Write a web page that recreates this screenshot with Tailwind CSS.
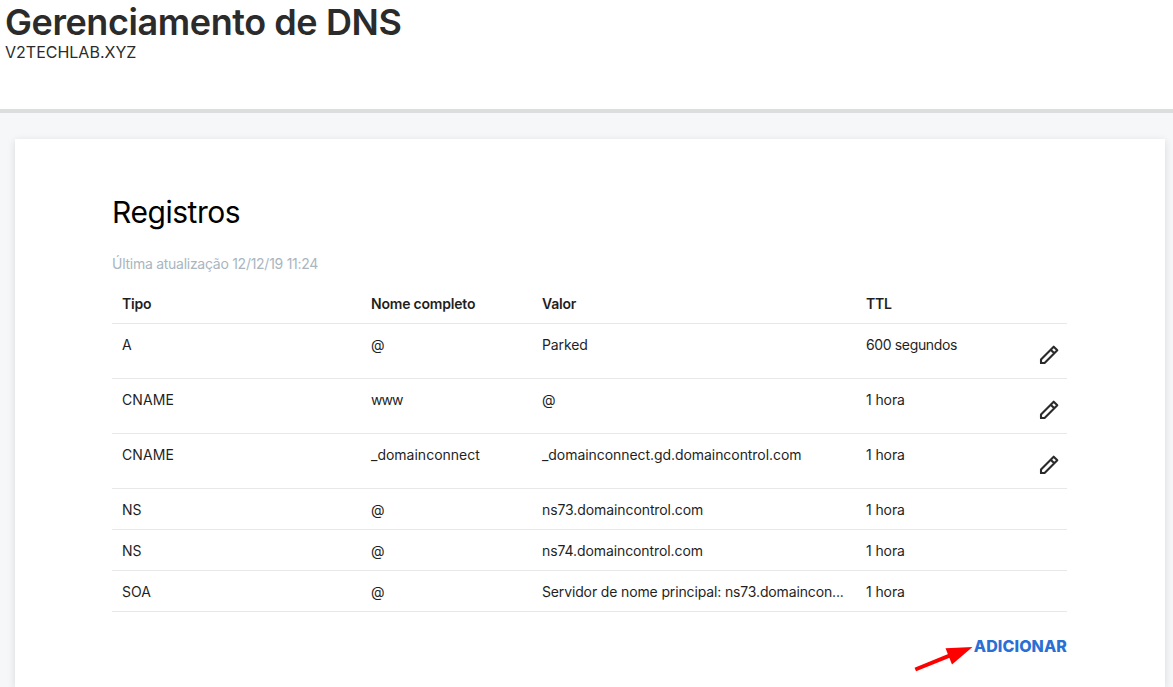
<!DOCTYPE html>
<html lang="pt-BR">
<head>
<meta charset="utf-8">
<title>Gerenciamento de DNS</title>
<script src="https://cdn.jsdelivr.net/npm/@tailwindcss/browser@4"></script>
</head>
<body class="h-[687px] overflow-hidden bg-[#f5f7f9] font-['Inter','Liberation_Sans',sans-serif] text-[#2b2b2b]">
<svg class="hidden"><symbol id="pencil" viewBox="0 0 20 20"><path d="M2 18v-3.600L14.700 1.700l3.600 3.600L5.600 18zM11.700 4.700l3.600 3.600" fill="none" stroke="#2b2b2b" stroke-width="2.100" stroke-linejoin="round"/><path d="M1 14.800V19h4.200z" fill="#2b2b2b"/></symbol></svg>
<div class="flex h-full flex-col">
  <header class="h-[113px] shrink-0 border-b-4 border-[#dcdddd] bg-white pl-[5px] pt-px">
    <h1 class="text-[36px] leading-[42px] font-semibold tracking-[-0.42px] whitespace-nowrap">Gerenciamento de DNS</h1>
    <p class="text-[16px] leading-[18px]">V2TECHLAB.XYZ</p>
  </header>
  <main class="mt-[26px] mr-2 ml-[15px] flex-1 bg-white pt-[53px] pr-[98px] pl-[97px] shadow-[0_2px_8px_rgba(0,0,0,0.12)]">
    <h2 class="text-[30px] leading-[40px] tracking-[-0.45px] text-black">Registros</h2>
    <p class="mt-[22px] text-[14px] leading-5 tracking-[-0.27px] text-[#a9b6c0]">Última atualização 12/12/19 11:24</p>
    <div class="mt-[10px] text-[14px] leading-5 whitespace-nowrap text-[#1f1f1f] *:grid *:h-[41px] *:grid-cols-[249px_171px_324px_1fr_28px] *:border-b *:border-[#e8e8e8] *:pt-[11px] *:pl-[10px]">
      <div class="h-10! pt-[10px]! font-semibold"><span class="tracking-[-0.2px]">Tipo</span><span class="tracking-[-0.2px]">Nome completo</span><span class="tracking-[-0.2px]">Valor</span><span class="tracking-[-0.2px]">TTL</span></div>
      <div class="h-[55px]!"><span>A</span><span>@</span><span class="tracking-[-0.1px]">Parked</span><span class="tracking-[-0.36px]">600 segundos</span><svg class="mt-[10px] size-5"><use href="#pencil"/></svg></div>
      <div class="h-[55px]!"><span class="tracking-[0.1px]">CNAME</span><span class="tracking-[-0.9px]">www</span><span>@</span><span class="tracking-[-0.1px]">1 hora</span><svg class="mt-[10px] size-5"><use href="#pencil"/></svg></div>
      <div class="h-[55px]!"><span class="tracking-[0.1px]">CNAME</span><span>_domainconnect</span><span class="tracking-[-0.06px]">_domainconnect.gd.domaincontrol.com</span><span class="tracking-[-0.1px]">1 hora</span><svg class="mt-[10px] size-5"><use href="#pencil"/></svg></div>
      <div><span>NS</span><span>@</span><span class="tracking-[-0.09px]">ns73.domaincontrol.com</span><span class="tracking-[-0.1px]">1 hora</span></div>
      <div><span>NS</span><span>@</span><span class="tracking-[-0.09px]">ns74.domaincontrol.com</span><span class="tracking-[-0.1px]">1 hora</span></div>
      <div><span>SOA</span><span>@</span><span class="tracking-[-0.14px]">Servidor de nome principal: ns73.domaincon...</span><span class="tracking-[-0.1px]">1 hora</span></div>
    </div>
    <div class="mt-[23px] flex justify-end">
      <svg class="mt-2.5 h-[28px] w-[60px]" viewBox="0 0 60 28"><path d="M1.300 24.500 38 9.700" stroke="red" stroke-width="4"/><path d="M58.500 2 31.500 3.300l6.500 16.200z" fill="red"/></svg>
      <a class="text-[16px] leading-[22px] font-extrabold tracking-[0.08px] text-[#2a70d4]">ADICIONAR</a>
    </div>
  </main>
</div>
</body>
</html>
